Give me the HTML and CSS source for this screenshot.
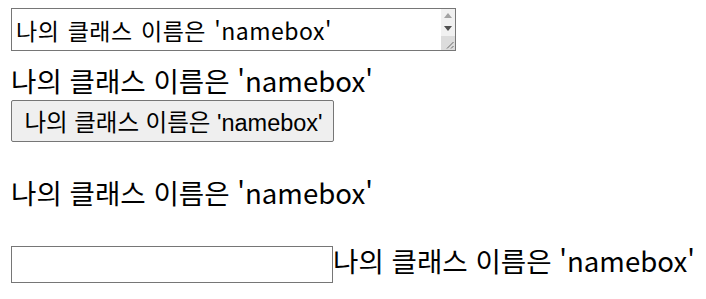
FILE: index.html
```html
<!DOCTYPE html>
<html lang="ko">
<head>
    <meta charset="UTF-8">
    <meta name="viewport" content="width=device-width, initial-scale=1.0">
    <title>namebox</title>
    <link rel="stylesheet" href="styles.css">
</head>
<body>
    <div class="page">
        <div class="area-wrap">
            <textarea class="namebox namebox-area">나의 클래스 이름은 'namebox'</textarea>
            <!-- scrollbar drawn by hand, the headless browser hides the real one -->
            <div class="area-bar">
                <div class="bar-btn">
                    <svg width="8" height="5" viewBox="0 0 8 5"><path d="M0 5L4 0L8 5Z" fill="#a3a3a3"/></svg>
                </div>
                <div class="bar-btn">
                    <svg width="8" height="5" viewBox="0 0 8 5"><path d="M0 0L8 0L4 5Z" fill="#505050"/></svg>
                </div>
                <div class="bar-corner">
                    <svg width="14" height="14" viewBox="0 0 14 14"><path d="M12.5 6L6 12.5M12.5 10L10 12.5" stroke="#6a6a6a" stroke-width="1"/></svg>
                </div>
            </div>
        </div>
        <div class="namebox namebox-text">나의 클래스 이름은 'namebox'</div>
        <button class="namebox namebox-button">나의 클래스 이름은 'namebox'</button>
        <p class="namebox namebox-para">나의 클래스 이름은 'namebox'</p>
        <div class="input-row">
            <input type="text" class="namebox namebox-input">
            <span class="namebox namebox-label">나의 클래스 이름은 'namebox'</span>
        </div>
    </div>
</body>
</html>
```

FILE: styles.css
```css
body {
    margin: 8px 8px 8px 11px;
    font-family: "Noto Sans CJK KR", sans-serif;
    color: #000;
    background: #fff;
}

.page {
    display: flex;
    flex-direction: column;
    align-items: flex-start;
}

.namebox {
    font-size: 27.6px;
    white-space: nowrap;
}

.area-wrap {
    position: relative;
    display: flex;
}

.namebox-area {
    width: 445px;
    height: 43px;
    box-sizing: border-box;
    margin: 0;
    padding: 4px 16px 2px 4px;
    border: 1px solid #767676;
    font-family: "Noto Sans CJK KR", monospace;
    font-size: 23px;
    line-height: normal;
    letter-spacing: 0.5px;
    word-spacing: 1.4px;
    overflow: hidden;
    resize: none;
}

.area-bar {
    position: absolute;
    top: 1px;
    right: 1px;
    bottom: 1px;
    width: 14px;
    display: flex;
    flex-direction: column;
    background: #f1f1f1;
}

.bar-btn {
    height: 13px;
    display: flex;
    align-items: center;
    justify-content: center;
}

.bar-corner {
    margin-top: auto;
    height: 14px;
    background: #dcdcdc;
    display: flex;
}

.namebox-text {
    margin-top: 9px;
}

.namebox-button {
    width: 323px;
    height: 42px;
    font-family: "Liberation Sans", "Noto Sans CJK KR", sans-serif;
    font-size: 23.5px;
    padding: 1px 6px 1px 8px;
    background: #efefef;
    color: #000;
    border: 1px solid #767676;
    border-radius: 2px;
}

.namebox-para {
    margin: 30px 0 28px;
}

.input-row {
    display: flex;
    align-items: flex-start;
}

.namebox-input {
    width: 322px;
    height: 37px;
    box-sizing: border-box;
    margin: 6px 0 0;
    padding: 1px 2px;
    border: 1px solid #767676;
}
```
